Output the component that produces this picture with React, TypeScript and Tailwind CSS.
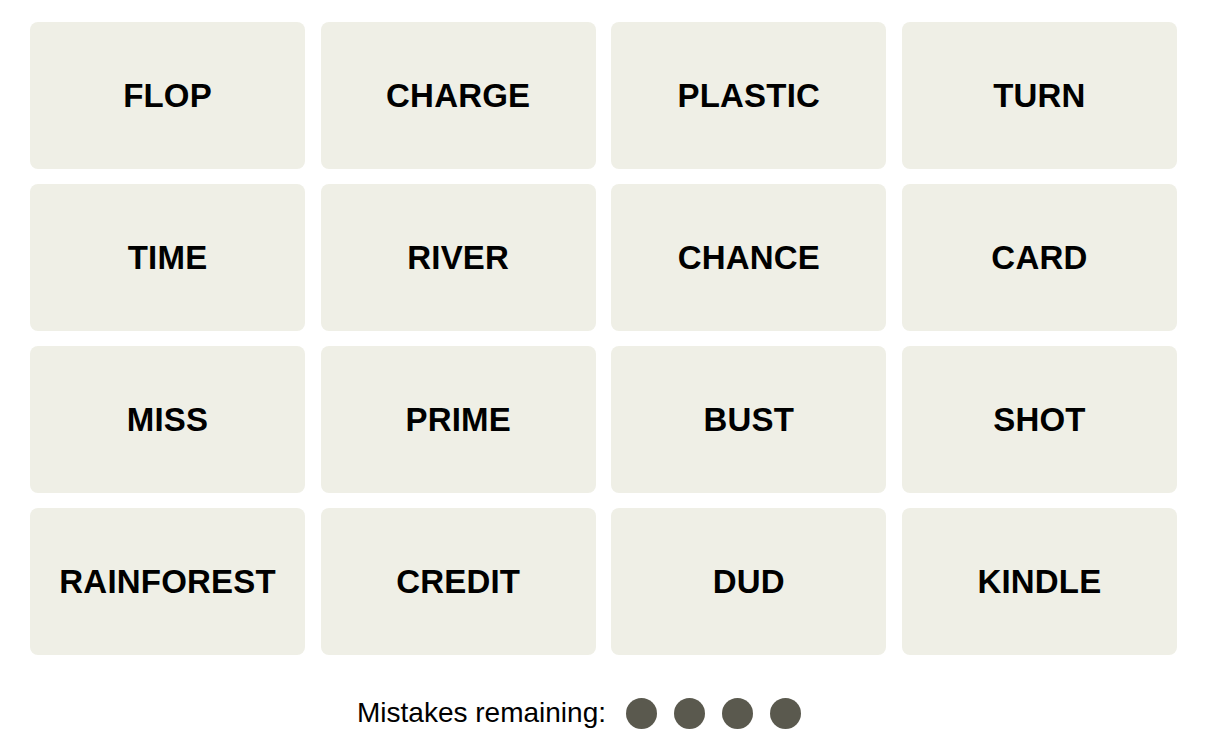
const words = [
  "FLOP", "CHARGE", "PLASTIC", "TURN",
  "TIME", "RIVER", "CHANCE", "CARD",
  "MISS", "PRIME", "BUST", "SHOT",
  "RAINFOREST", "CREDIT", "DUD", "KINDLE",
];

export default function App() {
  return (
    <div className="w-[1205px] h-[750px] bg-white font-['Liberation_Sans',Arial,sans-serif] text-black">
      <div className="ml-[30px] pt-[22px] w-[1147px] grid grid-cols-4 gap-[15.5px]">
        {words.map((w) => (
          <div
            key={w}
            className="h-[146.5px] rounded-lg bg-[#efefe6] flex items-center justify-center text-[33px] font-bold tracking-[0.2px]"
          >
            {w}
          </div>
        ))}
      </div>
      <div className="flex items-center pl-[357px] mt-[43px]">
        <span className="text-[28px] leading-none">Mistakes remaining:</span>
        <div className="flex gap-[17px] ml-[20px]">
          {[0, 1, 2, 3].map((i) => (
            <span key={i} className="w-[31px] h-[31px] rounded-full bg-[#5a594e]" />
          ))}
        </div>
      </div>
    </div>
  );
}
